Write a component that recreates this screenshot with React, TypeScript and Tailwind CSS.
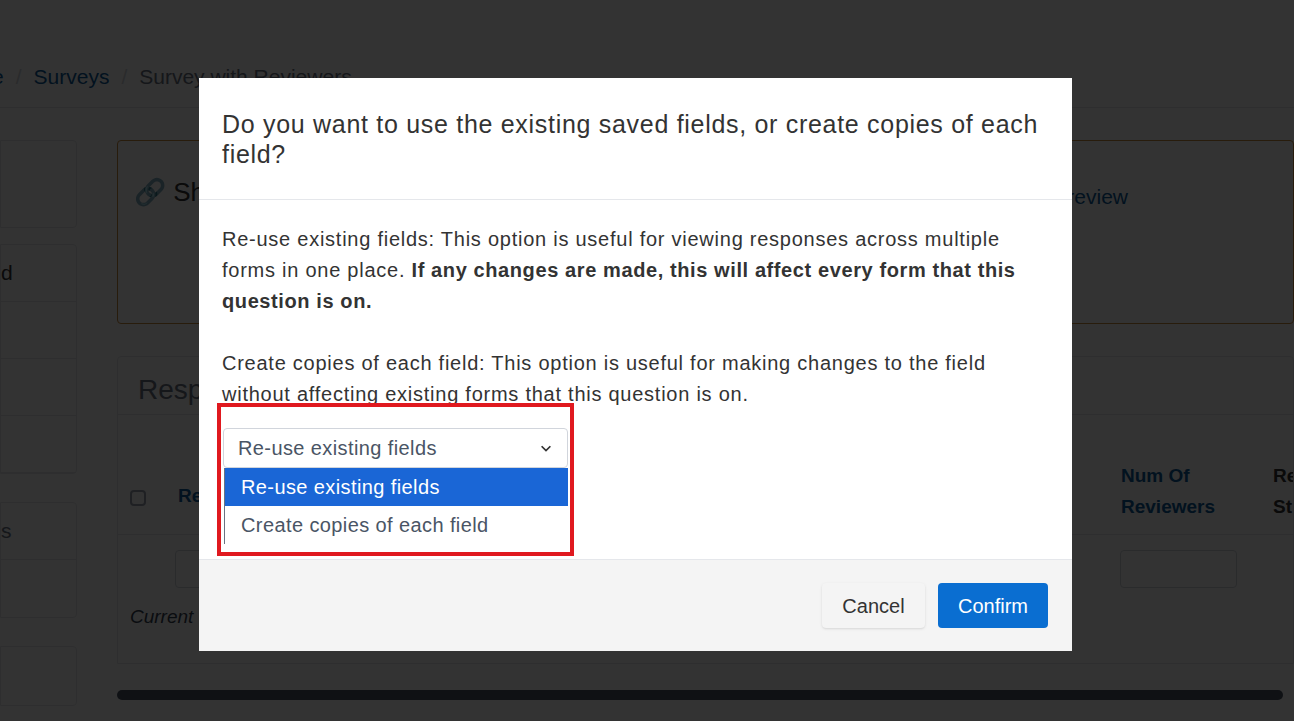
const font = { fontFamily: '"Liberation Sans", Arial, sans-serif' };

const Background = () => (
  <div className="min-h-[721px] bg-white text-[#333] overflow-hidden">
    <div className="h-[46px]" />
    <div className="flex items-center h-[62px] border-b border-gray-200 text-[21px] -ml-[8px] gap-3">
      <span className="text-[#0b5b99]">e</span>
      <span className="text-gray-300">/</span>
      <span className="text-[#0b5b99]">Surveys</span>
      <span className="text-gray-300">/</span>
      <span className="text-gray-500">Survey with Reviewers</span>
    </div>
    <div className="flex gap-[40px] pt-[32px]">
      <div className="w-[77px] flex flex-col gap-4 shrink-0">
        <div className="h-[88px] border border-gray-200 rounded-r" />
        <div className="border border-gray-200 rounded-r">
          {["d", "", "", ""].map((t, i) => (
            <div key={i} className="h-[57px] border-b border-gray-200 flex items-center text-[21px]">{t}</div>
          ))}
        </div>
        <div className="border border-gray-200 rounded-r mt-3">
          <div className="h-[57px] border-b border-gray-200 flex items-center text-[21px] text-gray-500">s</div>
          <div className="h-[57px]" />
        </div>
        <div className="h-[60px] border border-gray-200 rounded-r mt-3" />
      </div>
      <div className="flex-1 flex flex-col gap-[32px]">
        <div className="h-[184px] border border-[#c98a3c] rounded flex">
          <div className="px-4 pt-8 text-[26px]">🔗 Sh</div>
          <div className="ml-auto mr-[165px] pt-10 text-[21px] text-[#0b5b99]">Preview</div>
        </div>
        <div className="border border-gray-200 rounded-t">
          <div className="h-[58px] px-5 pt-3 text-[28px] text-gray-500 border-b border-gray-200">Resp</div>
          <div className="flex items-end h-[120px] pb-3 border-b border-gray-200 font-bold text-[#0b5b99] text-[19px]">
            <div className="w-4 h-4 border-2 border-gray-400 rounded ml-3 mb-4 shrink-0" />
            <div className="ml-8 mb-3">Re</div>
            <div className="ml-auto w-[152px] leading-[31px]">Num Of<br />Reviewers</div>
            <div className="w-[20px] text-[#333] leading-[31px] overflow-hidden">Re<br />St</div>
          </div>
          <div className="flex h-[68px] items-center">
            <div className="ml-[57px] w-[60px] h-[38px] border border-gray-300 rounded" />
            <div className="ml-auto mr-[56px] w-[117px] h-[38px] border border-gray-300 rounded" />
          </div>
          <div className="h-[60px] px-3 italic text-[19px] text-gray-700">Current</div>
        </div>
        <div className="h-[10px] bg-gray-600 rounded-full mr-[11px] -mt-[6px]" />
      </div>
    </div>
  </div>
);

export default function App() {
  return (
    <div className="relative w-[1294px] h-[721px] overflow-hidden" style={font}>
      <Background />
      <div className="absolute inset-0 bg-black/80" />
      <div className="absolute left-[199px] top-[78px] w-[873px] h-[573px] bg-white flex flex-col text-[#333]">
        <div className="h-[122px] px-[23px] pt-[31px] border-b border-gray-200 text-[25px] tracking-[0.7px] leading-[30px]">
          Do you want to use the existing saved fields, or create copies of each field?
        </div>
        <div className="h-[359px] px-[23px] pt-[24px] text-[20px] tracking-[0.75px] leading-[31px]">
          <p>
            Re-use existing fields: This option is useful for viewing responses across multiple forms in one place.{" "}
            <b className="tracking-[0.6px]">If any changes are made, this will affect every form that this question is on.</b>
          </p>
          <p className="mt-[31px]">
            Create copies of each field: This option is useful for making changes to the field without affecting existing forms that this question is on.
          </p>
          <div className="relative -mt-[7px] -ml-[5px] w-[357px] h-[153px] border-4 border-[#e0191f] bg-white px-[2px] pt-[21px] tracking-[0.4px]">
            <div className="h-[40px] border border-gray-300 rounded flex items-center justify-between px-[14px] text-gray-600">
              <span>Re-use existing fields</span>
              <svg width="14" height="14" viewBox="0 0 16 16" fill="none" stroke="#333" strokeWidth="2"><path d="M3 6l5 5 5-5" /></svg>
            </div>
            <div className="border-l border-gray-500 ml-[1px]">
              <div className="h-[38px] bg-[#1a66d6] text-white flex items-center px-[16px]">Re-use existing fields</div>
              <div className="h-[38px] flex items-center px-[16px] text-gray-600">Create copies of each field</div>
            </div>
          </div>
        </div>
        <div className="h-[92px] bg-[#f4f4f4] border-t border-gray-200 flex items-center justify-end gap-[13px] pr-[24px]">
          <button className="h-[45px] w-[103px] bg-[#f4f4f4] shadow-sm rounded text-[20px] text-[#333]">Cancel</button>
          <button className="h-[45px] w-[110px] bg-[#0a6ed1] rounded text-[20px] text-white">Confirm</button>
        </div>
      </div>
    </div>
  );
}
